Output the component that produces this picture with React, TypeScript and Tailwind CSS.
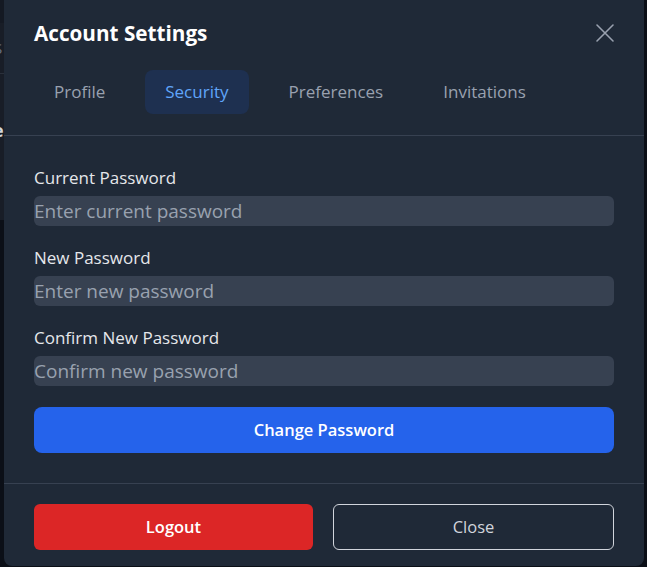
const tabs = ["Profile", "Security", "Preferences", "Invitations"];

const fields = [
  { label: "Current Password", placeholder: "Enter current password" },
  { label: "New Password", placeholder: "Enter new password" },
  { label: "Confirm New Password", placeholder: "Confirm new password" },
];

export default function App() {
  return (
    <div className="relative h-[567px] w-[647px] overflow-hidden bg-[#0b0f17] font-['Open_Sans',sans-serif]">
      {/* page behind the overlay */}
      <div className="absolute left-0 top-0 w-[40px]">
        <div className="h-[23px] bg-[#141923]" />
        <div className="flex h-[50px] items-center bg-[#181d27] text-[15px] text-gray-500">
          <span className="-ml-[6px]">S</span>
        </div>
        <div className="h-[1px] bg-[#2a303b]" />
        <div className="flex h-[146px] flex-col bg-[#181d27] pt-[44px]">
          <span className="-ml-[7px] text-[18px] font-bold leading-6 text-gray-300">e</span>
          <span className="-ml-[6px] text-[13px] text-gray-500">f</span>
        </div>
      </div>

      <div className="absolute left-[4px] top-0 flex w-[640px] flex-col rounded-b-lg bg-[#1f2937]">
        <div className="border-b border-[#374151] px-[30px] pb-[21px] pt-[19px]">
          <div className="flex items-center justify-between">
            <h2 className="text-[20.7px] font-bold leading-7 text-white">Account Settings</h2>
            <svg
              viewBox="0 0 24 24"
              className="-mr-[3px] h-6 w-6 text-gray-400"
              fill="none"
              stroke="currentColor"
              strokeWidth={1.6}
              strokeLinecap="round"
            >
              <path d="M4 4 20 20M20 4 4 20" />
            </svg>
          </div>
          <div className="mt-[23px] flex gap-5">
            {tabs.map((t) => (
              <div
                key={t}
                className={
                  t === "Security"
                    ? "rounded-lg bg-[#1e3050] px-5 py-[10px] text-[17px] leading-6 text-[#60a5fa]"
                    : "rounded-lg px-5 py-[10px] text-[17px] leading-6 text-gray-400"
                }
              >
                {t}
              </div>
            ))}
          </div>
        </div>

        <div className="flex flex-col gap-5 px-[30px] pb-[30px] pt-[30px]">
          {fields.map((f) => (
            <div key={f.label} className="flex flex-col gap-[6px]">
              <label className="text-[17px] font-medium leading-6 text-gray-200">{f.label}</label>
              <input
                type="password"
                placeholder={f.placeholder}
                className="h-[30px] rounded-md bg-[#374151] text-[19px] text-white outline-none placeholder:text-gray-400"
              />
            </div>
          ))}
          <button className="mt-[1px] h-[46px] rounded-lg bg-[#2563eb] text-[16.5px] font-semibold text-white">
            Change Password
          </button>
        </div>

        <div className="flex gap-5 border-t border-[#374151] px-[30px] pb-4 pt-5">
          <button className="h-[46px] flex-1 rounded-md bg-[#dc2626] text-[16.5px] font-semibold text-white">
            Logout
          </button>
          <button className="h-[46px] flex-1 rounded-md border border-gray-300 text-[16.5px] font-medium text-gray-300">
            Close
          </button>
        </div>
      </div>
    </div>
  );
}
